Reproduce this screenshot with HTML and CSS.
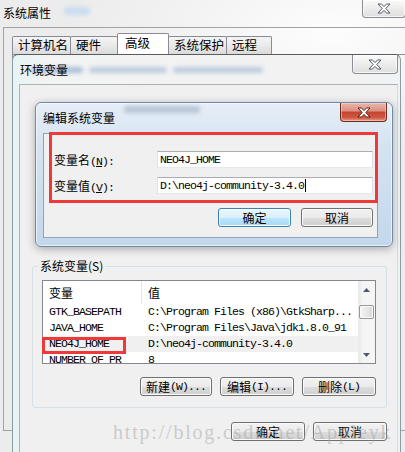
FILE: index.html
```html
<!DOCTYPE html>
<html lang="zh-CN">
<head>
<meta charset="utf-8">
<link rel="stylesheet" href="styles.css">
</head>
<body>
<div class="desk">

  <div class="win-sys">
    <div class="titlebar sys-bar">
      <span class="title">系统属性</span>
      <span class="ghost ghost-sys"></span>
      <div class="close sys-close">
        <svg class="x" viewBox="0 0 14 11" width="14" height="11"><path d="M1 1h3.5l2.5 2.6 2.5-2.6h3.5l-4.2 4.5 4.2 4.5h-3.5l-2.5-2.6-2.5 2.6h-3.5l4.2-4.5z" fill="#fff" stroke="#535b66" stroke-width="1"/></svg>
      </div>
    </div>
    <div class="sys-client">
      <div class="tabs">
        <div class="tab t1">计算机名</div>
        <div class="tab t2">硬件</div>
        <div class="tab t3 active">高级</div>
        <div class="tab t4">系统保护</div>
        <div class="tab t5">远程</div>
      </div>
      <div class="tab-panel"></div>
    </div>
  </div>

  <div class="win-env">
    <div class="titlebar env-bar">
      <span class="ghost ghost-env g1"></span>
      <span class="ghost ghost-env g2"></span>
      <span class="ghost ghost-env g3"></span>
      <span class="title">环境变量</span>
      <div class="close env-close">
        <svg class="x" viewBox="0 0 14 11" width="14" height="11"><path d="M1 1h3.5l2.5 2.6 2.5-2.6h3.5l-4.2 4.5 4.2 4.5h-3.5l-2.5-2.6-2.5 2.6h-3.5l4.2-4.5z" fill="#fff" stroke="#535b66" stroke-width="1"/></svg>
      </div>
    </div>
    <div class="env-client">
      <fieldset class="group">
        <legend>系统变量(S)</legend>
        <div class="listview">
          <div class="lv-main">
            <div class="lv-head">
              <div class="c1">变量</div>
              <div class="c2">值</div>
            </div>
            <div class="row mono"><div class="c1">GTK_BASEPATH</div><div class="c2">C:\Program Files (x86)\GtkSharp...</div></div>
            <div class="row mono"><div class="c1">JAVA_HOME</div><div class="c2">C:\Program Files\Java\jdk1.8.0_91</div></div>
            <div class="row mono sel"><div class="c1">NEO4J_HOME</div><div class="c2">D:\neo4j-community-3.4.0</div></div>
            <div class="row mono"><div class="c1">NUMBER_OF_PR</div><div class="c2">8</div></div>
          </div>
          <div class="scroll">
            <div class="sb-btn"><svg width="7" height="4" viewBox="0 0 7 4"><path d="M0 4L3.5 0 7 4z" fill="#4e5a6b"/></svg></div>
            <div class="thumb"></div>
            <div class="sb-space"></div>
            <div class="sb-btn"><svg width="7" height="4" viewBox="0 0 7 4"><path d="M0 0L3.5 4 7 0z" fill="#4e5a6b"/></svg></div>
          </div>
          <div class="mark mark-row"></div>
        </div>
        <div class="btnrow grp-btns">
          <div class="btn w72"><span class="cn">新建</span><span class="mono">(W)...</span></div>
          <div class="btn w74"><span class="cn">编辑</span><span class="mono">(I)...</span></div>
          <div class="btn w74"><span class="cn">删除</span><span class="mono">(L)</span></div>
        </div>
      </fieldset>
      <div class="btnrow env-btns">
        <div class="btn w74">确定</div>
        <div class="btn w74">取消</div>
      </div>
    </div>
  </div>

  <div class="win-edit">
    <div class="titlebar edit-bar">
      <span class="ghost ghost-edit"></span>
      <span class="title">编辑系统变量</span>
      <div class="close red-close">
        <svg class="x" viewBox="0 0 14 11" width="14" height="11"><path d="M1 1h3.5l2.5 2.6 2.5-2.6h3.5l-4.2 4.5 4.2 4.5h-3.5l-2.5-2.6-2.5 2.6h-3.5l4.2-4.5z" fill="#fff" stroke="#5a1f16" stroke-width="1"/></svg>
      </div>
    </div>
    <div class="edit-client">
      <div class="field">
        <span class="lbl mono"><span class="cn">变量名</span>(<u>N</u>):</span>
        <div class="input mono">NEO4J_HOME</div>
      </div>
      <div class="field">
        <span class="lbl mono"><span class="cn">变量值</span>(<u>V</u>):</span>
        <div class="input mono">D:\neo4j-community-3.4.0<span class="caret"></span></div>
      </div>
      <div class="btnrow edit-btns">
        <div class="btn def w73">确定</div>
        <div class="btn w72">取消</div>
      </div>
      <div class="mark mark-edit"></div>
    </div>
  </div>

  <div class="watermark">http://blog.csdn.net/Appleyk</div>
</div>
</body>
</html>
```

FILE: styles.css
```css
* { box-sizing: border-box; margin: 0; padding: 0; }
html, body { width: 405px; height: 452px; overflow: hidden; }
body {
  font-family: "Noto Sans CJK SC", sans-serif;
  font-size: 12px;
  color: #000;
  background: #ececec;
}
.desk {
  position: relative;
  width: 405px;
  height: 452px;
  overflow: hidden;
  background: radial-gradient(ellipse 260px 120px at 330px 30px, #fdfdfd 0%, #f2f2f2 60%, #ececec 100%);
}
.cn { font-family: "Noto Sans CJK SC", sans-serif; font-size: 12px; letter-spacing: 0; }
.mono { font-family: "Liberation Mono", monospace; font-size: 11.5px; letter-spacing: -0.9px; }
u { text-decoration: underline; }

/* shared title bar */
.titlebar { display: flex; justify-content: space-between; align-items: flex-start; flex: none; position: relative; }
.title { font-size: 12px; line-height: 20px; position: relative; z-index: 1; }
.close {
  height: 19px;
  border: 1px solid #8a8e94;
  border-top: none;
  border-radius: 0 0 4px 4px;
  background: linear-gradient(#fbfbfb, #ececec 50%, #dedede);
  box-shadow: inset 0 0 0 1px rgba(255,255,255,.7);
  display: flex;
  align-items: center;
  justify-content: center;
  position: relative;
  z-index: 1;
}
.ghost {
  position: absolute;
  height: 6px;
  border-radius: 3px;
  filter: blur(2px);
}

/* 系统属性 */
.win-sys { position: absolute; inset: 0; display: flex; flex-direction: column; }
.sys-bar { height: 27px; padding-left: 3px; }
.sys-bar .title { padding-top: 3px; }
.sys-close { width: 44px; height: 18px; margin-right: -1px; }
.ghost-sys { left: 64px; top: 7px; width: 26px; height: 8px; background: #bcd6f2; opacity: .7; }
.sys-client {
  margin-left: 3px;
  height: 404px;
  border: 1px solid #a3a3a3;
  border-right: none;
  display: flex;
  flex-direction: column;
  padding-top: 5px;
}
.tabs { display: flex; align-items: flex-end; height: 21px; padding-left: 8px; flex: none; }
.tab {
  height: 18px;
  border: 1px solid #898c95;
  border-bottom: none;
  background: linear-gradient(#f4f4f4, #eaeaea 50%, #dadada);
  font-size: 12.5px;
  line-height: 16px;
  padding-left: 5px;
  margin-right: -1px;
  border-radius: 2px 2px 0 0;
}
.t1 { width: 59px; }
.t2 { width: 48px; }
.t3 { width: 52px; }
.t4 { width: 59px; }
.t5 { width: 46px; }
.tab.active { height: 21px; background: #fff; padding-left: 7px; line-height: 17px; position: relative; z-index: 1; }
.tab-panel { flex: 1; margin-left: 8px; border-left: 1px solid #898c95; border-top: 1px solid #898c95; }

/* 环境变量 */
.win-env {
  position: absolute;
  left: 12px;
  top: 54px;
  width: 389px;
  height: 410px;
  border: 1px solid #8f9ba3;
  border-top-color: #5b5b5b;
  border-radius: 6px 6px 0 0;
  background: linear-gradient(90deg, #e6f4f5, #f2f3f3 8%, #f2f2f2 92%, #eef3f4);
  display: flex;
  flex-direction: column;
}
.env-bar { height: 29px; padding-left: 7px; }
.env-bar .title { padding-top: 5px; }
.env-close { width: 46px; margin-right: 2px; }
.ghost-env { top: 12px; background: #7d9cc8; opacity: .6; }
.g1 { left: 18px; width: 52px; }
.g2 { left: 76px; width: 78px; opacity: .45; }
.g3 { left: 160px; width: 90px; opacity: .45; }
.env-client {
  flex: 1;
  margin: 0 2px 0 6px;
  border: 1px solid #aeb2b5;
  border-right-color: #d8d8d8;
  background: #f0f0f0;
  padding: 0 10px 0 12px;
  display: flex;
  flex-direction: column;
}
.group {
  margin-top: 173px;
  border: 1px solid #d5dfe5;
  border-radius: 3px;
  padding: 0 10px 11px 9px;
  min-width: 0;
}
.group legend { margin-left: -4px; padding: 0 2px; font-size: 12px; line-height: 16px; }

.listview {
  margin-top: 6px;
  height: 84px;
  border: 1px solid #828790;
  background: #fff;
  display: flex;
  position: relative;
}
.lv-main { flex: 1; display: flex; flex-direction: column; overflow: hidden; min-width: 0; }
.lv-head { display: flex; height: 23px; flex: none; }
.lv-head div { line-height: 23px; font-size: 12px; }
.lv-head .c1 { border-right: 1px solid #e3e3e3; }
.c1 { width: 99px; padding-left: 6px; flex: none; white-space: nowrap; overflow: hidden; }
.c2 { flex: 1; padding-left: 6px; white-space: nowrap; overflow: hidden; }
.row { display: flex; height: 16px; flex: none; line-height: 16px; }
.row.sel { background: #f0f0f0; }

.scroll {
  width: 17px;
  flex: none;
  background: linear-gradient(90deg, #e8e8e8, #f5f5f5 30%, #f5f5f5);
  display: flex;
  flex-direction: column;
  align-items: center;
}
.sb-btn { height: 17px; width: 17px; flex: none; display: flex; align-items: center; justify-content: center; }
.thumb {
  margin-top: 7px;
  width: 15px;
  height: 14px;
  flex: none;
  border: 1px solid #979797;
  border-radius: 2px;
  background: linear-gradient(90deg, #f6f6f6, #e8e8e8 50%, #d8d8d8);
  box-shadow: inset 0 0 0 1px #fafafa;
}
.sb-space { flex: 1; }

.mark { position: absolute; border: 3px solid #ef3838; }
.mark-row { left: -1px; top: 56px; width: 84px; height: 17px; }
.mark-edit { left: 5px; top: -2px; right: -1px; height: 71px; }

/* buttons */
.btnrow { display: flex; justify-content: flex-end; flex: none; }
.btn {
  height: 19px;
  border: 1px solid #707070;
  border-radius: 3px;
  background: linear-gradient(#f2f2f2, #ebebeb 50%, #dddddd 51%, #cfcfcf);
  box-shadow: inset 0 0 0 1px #fbfbfb;
  display: flex;
  align-items: center;
  justify-content: center;
  font-size: 12px;
  line-height: 16px;
  white-space: nowrap;
}
.btn.def {
  border-color: #3c7fb1;
  background: linear-gradient(#eaf6fd, #d9f0fc 50%, #bee6fd 51%, #a7d9f5);
}
.w72 { width: 72px; }
.w73 { width: 73px; }
.w74 { width: 74px; }
.grp-btns { margin-top: 13px; gap: 8px; }
.env-btns { margin-top: 14px; gap: 8px; }

/* 编辑系统变量 */
.win-edit {
  position: absolute;
  left: 35px;
  top: 102px;
  width: 358px;
  height: 145px;
  border: 1px solid #6e8aa8;
  border-radius: 6px;
  background: linear-gradient(#e6eef7, #d5e3f1 30%, #c3d7ec);
  box-shadow: 0 2px 8px rgba(0,0,0,.3), inset 0 0 0 1px rgba(255,255,255,.6);
  display: flex;
  flex-direction: column;
}
.edit-bar { height: 30px; padding-left: 7px; }
.edit-bar .title { padding-top: 5px; }
.ghost-edit { left: 88px; top: 3px; width: 76px; height: 7px; background: #9aaabb; opacity: .6; }
.red-close {
  width: 47px;
  margin-right: 5px;
  border-color: #6c2a20;
  background: linear-gradient(#eab6ab, #db8f80 45%, #c4442f 50%, #cd5640 80%, #e39c86);
  box-shadow: inset 0 0 0 1px rgba(255,220,210,.5);
}
.edit-client {
  margin: 0 14px 0 7px;
  height: 105px;
  border: 1px solid #8ea3ba;
  background: #f0f0f0;
  position: relative;
  padding: 17px 4px 0 10px;
  display: flex;
  flex-direction: column;
}
.field { display: flex; align-items: center; height: 17px; flex: none; }
.field + .field { margin-top: 9px; }
.lbl { width: 103px; flex: none; white-space: nowrap; }
.input {
  width: 216px;
  height: 17px;
  border: 1px solid #abadb3;
  border-color: #abadb3 #dbdfe6 #e3e9ef #e2e3ea;
  background: #fff;
  padding-left: 2px;
  line-height: 15px;
  white-space: nowrap;
}
.caret { display: inline-block; width: 1px; height: 13px; background: #000; vertical-align: -3px; margin-left: 1px; }
.edit-btns { margin-top: 14px; gap: 10px; }

.watermark {
  position: absolute;
  left: 113px;
  top: 422px;
  font-family: "Liberation Serif", serif;
  font-size: 20px;
  line-height: 20px;
  letter-spacing: 1.8px;
  color: rgba(165,165,165,.5);
  white-space: nowrap;
}
```
